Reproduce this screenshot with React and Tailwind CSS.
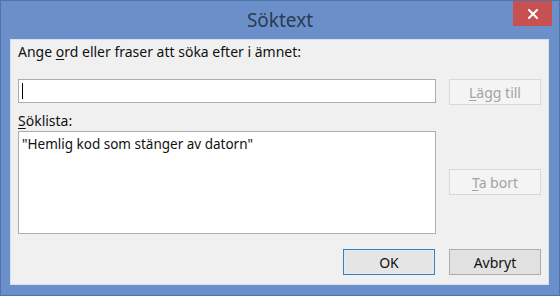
const FONT = { fontFamily: '"Noto Sans", "Open Sans", sans-serif' };

function DlgButton({ children, disabled, isDefault, className = '' }) {
    const tone = disabled
        ? 'border-[#d9d9d9] bg-[#f4f4f4] text-[#a3a3a3]'
        : isDefault
            ? 'border-[#3c7fb1] bg-[#e5e5e5] text-[#111] shadow-[inset_0_0_0_1px_#dcecfc]'
            : 'border-[#adadad] bg-[#e1e1e1] text-[#111]';
    return (
        <div className={`flex h-[26px] w-[92px] items-center justify-center border text-[14px] ${tone} ${className}`}>
            {children}
        </div>
    );
}

export default function App() {
    return (
        <div className="h-[296px] w-[560px] overflow-hidden bg-[#6b8fc8]" style={FONT}>
            <div className="flex h-full flex-col border border-[#5273aa]">
                {/* title bar */}
                <div className="grid h-[38px] shrink-0 grid-cols-[1fr_auto_1fr]">
                    <div />
                    <div className="pt-[6px] text-[19px] leading-[26px] text-[#2b3a52]">Söktext</div>
                    <div className="flex justify-end pr-[7px]">
                        <div className="flex h-[25px] w-[39px] items-center justify-center bg-[#c75050]">
                            <svg width="10" height="10" viewBox="0 0 10 10">
                                <path d="M1 1 L9 9 M9 1 L1 9" stroke="#fff" strokeWidth="2" strokeLinecap="square" />
                            </svg>
                        </div>
                    </div>
                </div>

                {/* client area */}
                <div className="mb-[10px] ml-[9px] mr-[10px] flex flex-1 flex-col border border-[#d6e0f0] bg-[#f0f0f0] px-[7px] text-[#111]">
                    <div className="mt-[2px] h-[20px] text-[14px] leading-[20px]">
                        Ange <span className="underline underline-offset-2">o</span>rd eller fraser att söka efter i ämnet:
                    </div>

                    <div className="mt-[17px] flex gap-[13px]">
                        <div className="flex h-[24px] w-[418px] items-center border border-[#abadb3] bg-white pl-[3px]">
                            <div className="h-[16px] w-px bg-black" />
                        </div>
                        <DlgButton disabled>
                            <span><span className="underline underline-offset-2">L</span>ägg till</span>
                        </DlgButton>
                    </div>

                    <div className="mt-[6px] h-[20px] text-[14px] leading-[20px]">
                        <span className="underline underline-offset-2">S</span>öklista:
                    </div>

                    <div className="flex gap-[13px]">
                        <div className="h-[103px] w-[418px] border border-[#abadb3] bg-white px-[3px] pt-[3px] text-[13.5px] leading-[18px]">
                            "Hemlig kod som stänger av datorn"
                        </div>
                        <div className="pt-[38px]">
                            <DlgButton disabled>
                                <span><span className="underline underline-offset-2">T</span>a bort</span>
                            </DlgButton>
                        </div>
                    </div>

                    <div className="mt-[15px] flex justify-end gap-[14px]">
                        <DlgButton isDefault className="h-[26px]">OK</DlgButton>
                        <DlgButton>Avbryt</DlgButton>
                    </div>
                </div>
            </div>
        </div>
    );
}
